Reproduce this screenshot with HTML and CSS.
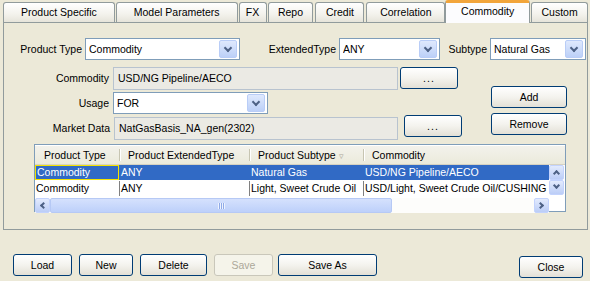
FILE: index.html
```html
<!DOCTYPE html>
<html lang="en">
  <head>
    <meta charset="UTF-8" />
    <title>Commodity</title>
    <link rel="stylesheet" href="styles.css">
  </head>
  <body>
    <div class="tabs">
      <div class="tab tab-ps">Product Specific</div>
      <div class="tab tab-mp">Model Parameters</div>
      <div class="tab tab-fx">FX</div>
      <div class="tab tab-repo">Repo</div>
      <div class="tab tab-credit">Credit</div>
      <div class="tab tab-corr">Correlation</div>
      <div class="tab tab-comm active">Commodity</div>
      <div class="tab tab-custom">Custom</div>
    </div>

    <div class="panel">
      <div class="row-top">
        <label class="lbl lbl-pt">Product Type</label>
        <div class="combo combo-pt"><span>Commodity</span><i class="arrow"></i></div>
        <label class="lbl lbl-et">ExtendedType</label>
        <div class="combo combo-et"><span>ANY</span><i class="arrow"></i></div>
        <label class="lbl lbl-st">Subtype</label>
        <div class="combo combo-st"><span>Natural Gas</span><i class="arrow"></i></div>
      </div>

      <div class="mid">
        <div class="fields">
          <div class="frow frow-comm">
            <label class="lbl lbl-left">Commodity</label>
            <div class="field">USD/NG Pipeline/AECO</div>
            <button class="btn btn-dots">...</button>
          </div>
          <div class="frow frow-usage">
            <label class="lbl lbl-left">Usage</label>
            <div class="combo combo-usage"><span>FOR</span><i class="arrow"></i></div>
          </div>
          <div class="frow frow-md">
            <label class="lbl lbl-left">Market Data</label>
            <div class="field field-md">NatGasBasis_NA_gen(2302)</div>
            <button class="btn btn-dots btn-dots-md">...</button>
          </div>
        </div>
        <div class="side">
          <button class="btn btn-side">Add</button>
          <button class="btn btn-side">Remove</button>
        </div>
      </div>

      <div class="grid">
        <div class="grid-head">
          <div class="cell c1">Product Type</div>
          <div class="cell c2">Product ExtendedType</div>
          <div class="cell c3">Product Subtype <span class="sort">&#9663;</span></div>
          <div class="cell c4">Commodity</div>
        </div>
        <div class="grid-body">
          <div class="rows">
            <div class="grow selected">
              <div class="cell c1 focus">Commodity</div>
              <div class="cell c2">ANY</div>
              <div class="cell c3">Natural Gas</div>
              <div class="cell c4">USD/NG Pipeline/AECO</div>
            </div>
            <div class="grow">
              <div class="cell c1">Commodity</div>
              <div class="cell c2">ANY</div>
              <div class="cell c3">Light, Sweet Crude Oil</div>
              <div class="cell c4">USD/Light, Sweet Crude Oil/CUSHING O</div>
            </div>
          </div>
          <div class="vscroll">
            <div class="sbtn up"></div>
            <div class="sbtn down"></div>
          </div>
        </div>
        <div class="hscroll">
          <div class="sbtn left"></div>
          <div class="thumb"><span class="grip"></span></div>
          <div class="track"></div>
          <div class="sbtn right"></div>
        </div>
      </div>
    </div>

    <div class="actions">
      <button class="btn btn-load">Load</button>
      <button class="btn btn-new">New</button>
      <button class="btn btn-delete">Delete</button>
      <button class="btn btn-save" disabled>Save</button>
      <button class="btn btn-saveas">Save As</button>
      <button class="btn btn-close">Close</button>
    </div>
  </body>
</html>
```

FILE: styles.css
```css
body {
  margin: 0;
  background: #ece9d8;
  font-family: Tahoma, "Liberation Sans", Arial, sans-serif;
  font-size: 10.5px;
  color: #000;
  width: 590px;
  height: 281px;
  overflow: hidden;
}
.tabs {
  display: flex;
  align-items: flex-end;
  height: 22px;
  padding-left: 3px;
}
.tab {
  box-sizing: border-box;
  height: 20px;
  margin-right: 2px;
  border: 1px solid #919b9c;
  border-bottom: none;
  border-radius: 3px 3px 0 0;
  background: linear-gradient(to bottom, #ffffff, #f3f2ec 60%, #e6e4da);
  text-align: center;
  line-height: 19px;
}
.tab-ps { width: 112px; }
.tab-mp { width: 122px; margin-left: -1px; }
.tab-fx { width: 28px; margin-left: -1px; }
.tab-repo { width: 46px; margin-left: -1px; }
.tab-credit { width: 49px; }
.tab-corr { width: 79px; margin-right: 0; }
.tab-custom { width: 57px; margin-left: 1px; }
.tab.active {
  width: 85px;
  height: 23px;
  margin-right: 0;
  margin-bottom: -1px;
  border-top: 3px solid #ffc83c;
  border-color: #919b9c;
  border-top-color: #f2a53b;
  background: #fcfcfe;
  line-height: 17px;
  position: relative;
  z-index: 1;
}
.panel {
  box-sizing: border-box;
  margin-left: 3px;
  width: 585px;
  height: 208px;
  border: 1px solid #919b9c;
  background: #ece9d8;
  padding-top: 15px;
}
.lbl {
  display: block;
  text-align: right;
  white-space: nowrap;
}
.row-top {
  display: flex;
  align-items: center;
  height: 22px;
}
.lbl-pt { width: 78px; margin-right: 3px; }
.lbl-et { width: 96px; margin-right: 3px; }
.lbl-st { width: 47px; margin-right: 3px; }
.combo {
  box-sizing: border-box;
  display: flex;
  align-items: center;
  height: 22px;
  border: 1px solid #7f9db9;
  background: #fff;
  padding: 2px 2px 2px 3px;
}
.combo span {
  flex: 1;
  white-space: nowrap;
  overflow: hidden;
}
.combo-pt { width: 155px; }
.combo-et { width: 101px; }
.combo-st { width: 96px; }
.combo-usage { width: 155px; }
.arrow {
  display: block;
  width: 16px;
  height: 16px;
  border: 1px solid #b9cdf7;
  border-radius: 2px;
  background: linear-gradient(to bottom, #dfe9fd, #bcd0f8);
  position: relative;
}
.arrow::after {
  content: "";
  position: absolute;
  left: 5px;
  top: 4px;
  width: 4px;
  height: 4px;
  border-right: 2px solid #4d6185;
  border-bottom: 2px solid #4d6185;
  transform: rotate(45deg);
}
.mid {
  display: flex;
  margin-top: 7px;
}
.fields {
  width: 487px;
}
.frow {
  display: flex;
  align-items: flex-start;
}
.lbl-left {
  width: 105px;
  margin-right: 4px;
  line-height: 23px;
}
.field {
  box-sizing: border-box;
  width: 285px;
  height: 23px;
  border: 1px solid #b8c3cf;
  background: #ebeae4;
  padding-left: 4px;
  line-height: 21px;
  white-space: nowrap;
}
.frow-usage { margin-top: 2px; }
.frow-usage .lbl-left { line-height: 22px; }
.frow-md { margin-top: 3px; }
.frow-md .lbl-left { width: 106px; margin-right: 4px; }
.field-md { width: 284px; }
button {
  font-family: inherit;
  font-size: 10.5px;
}
.btn {
  box-sizing: border-box;
  height: 22px;
  padding: 0;
  border: 1px solid #003c74;
  border-radius: 3px;
  background: linear-gradient(to bottom, #ffffff, #f4f3ee 50%, #e3e0d6);
  color: #000;
  cursor: pointer;
}
.btn-dots {
  width: 58px;
  height: 22px;
  margin-left: 2px;
  letter-spacing: 1px;
}
.btn-dots-md {
  margin-left: 6px;
  margin-top: -2px;
}
.side {
  display: flex;
  flex-direction: column;
  gap: 5px;
  margin-top: 19px;
}
.btn-side {
  width: 76px;
}
.grid {
  box-sizing: border-box;
  margin: 4px 0 0 30px;
  width: 532px;
  height: 68px;
  border: 1px solid #7f9db9;
  background: #fff;
}
.grid-head {
  display: flex;
  height: 18px;
  background: linear-gradient(to bottom, #f3f2ec, #ebeadb);
  border-bottom: 1px solid #d6d2c2;
  margin-top: 1px;
}
.grid-head .cell {
  line-height: 18px;
  padding-left: 9px;
  position: relative;
}
.grid-head .cell + .cell::before {
  content: "";
  position: absolute;
  left: 0;
  top: 3px;
  height: 12px;
  border-left: 1px solid #c7c5b2;
  border-right: 1px solid #fff;
}
.sort {
  color: #aca899;
  font-size: 9px;
}
.cell {
  box-sizing: border-box;
  white-space: nowrap;
  overflow: hidden;
}
.c1 { width: 84px; }
.c2 { width: 130px; }
.c3 { width: 114px; }
.c4 { width: 186px; }
.grid-body {
  display: flex;
}
.rows {
  width: 514px;
}
.grow {
  display: flex;
  height: 15px;
  line-height: 14px;
  border-bottom: 1px solid #fff;
}
.grow .cell {
  padding-left: 1px;
  border-left: 1px solid #808080;
}
.grow .cell.c1 { border-left: none; }
.grow.selected {
  background: #316ac5;
  color: #fff;
}
.grow.selected .cell { border-left-color: #316ac5; }
.grow .cell.focus {
  border: 1px solid #f4e300;
  line-height: 12px;
}
.vscroll {
  width: 15px;
}
.sbtn {
  box-sizing: border-box;
  width: 15px;
  height: 15px;
  border: 1px solid #c3d3fd;
  border-radius: 2px;
  background: linear-gradient(to bottom, #e3ebfd, #bbcdf7);
  position: relative;
}
.sbtn::after {
  content: "";
  position: absolute;
  width: 3px;
  height: 3px;
  border-right: 2px solid #4d6185;
  border-bottom: 2px solid #4d6185;
}
.sbtn.up::after { left: 4px; top: 5px; transform: rotate(-135deg); }
.sbtn.down::after { left: 4px; top: 2px; transform: rotate(45deg); }
.sbtn.left::after { left: 5px; top: 4px; transform: rotate(135deg); }
.sbtn.right::after { left: 3px; top: 4px; transform: rotate(-45deg); }
.hscroll {
  display: flex;
  height: 15px;
  margin-top: 1px;
  width: 514px;
  background: #fdfdfb;
}
.thumb {
  box-sizing: border-box;
  width: 342px;
  height: 15px;
  border: 1px solid #b6c9f5;
  border-radius: 2px;
  background: linear-gradient(to bottom, #d5e1fd, #bdd0fa);
  display: flex;
  align-items: center;
  justify-content: center;
}
.grip {
  width: 7px;
  height: 6px;
  background: repeating-linear-gradient(to right, #eef3fe 0 1px, #8faae8 1px 2px);
}
.track {
  flex: 1;
}
.actions {
  display: flex;
  margin-top: 24px;
  padding-left: 13px;
}
.actions .btn { height: 22px; }
.btn-load { width: 59px; margin-right: 7px; }
.btn-new { width: 54px; margin-right: 7px; }
.btn-delete { width: 67px; margin-right: 7px; }
.btn-save {
  width: 59px;
  margin-right: 5px;
  border-color: #c9c7ba;
  background: #f5f4ea;
  color: #aca899;
  cursor: default;
}
.btn-saveas { width: 99px; }
.btn-close {
  width: 64px;
  margin-left: auto;
  margin-right: 7px;
  margin-top: 2px;
}
```
